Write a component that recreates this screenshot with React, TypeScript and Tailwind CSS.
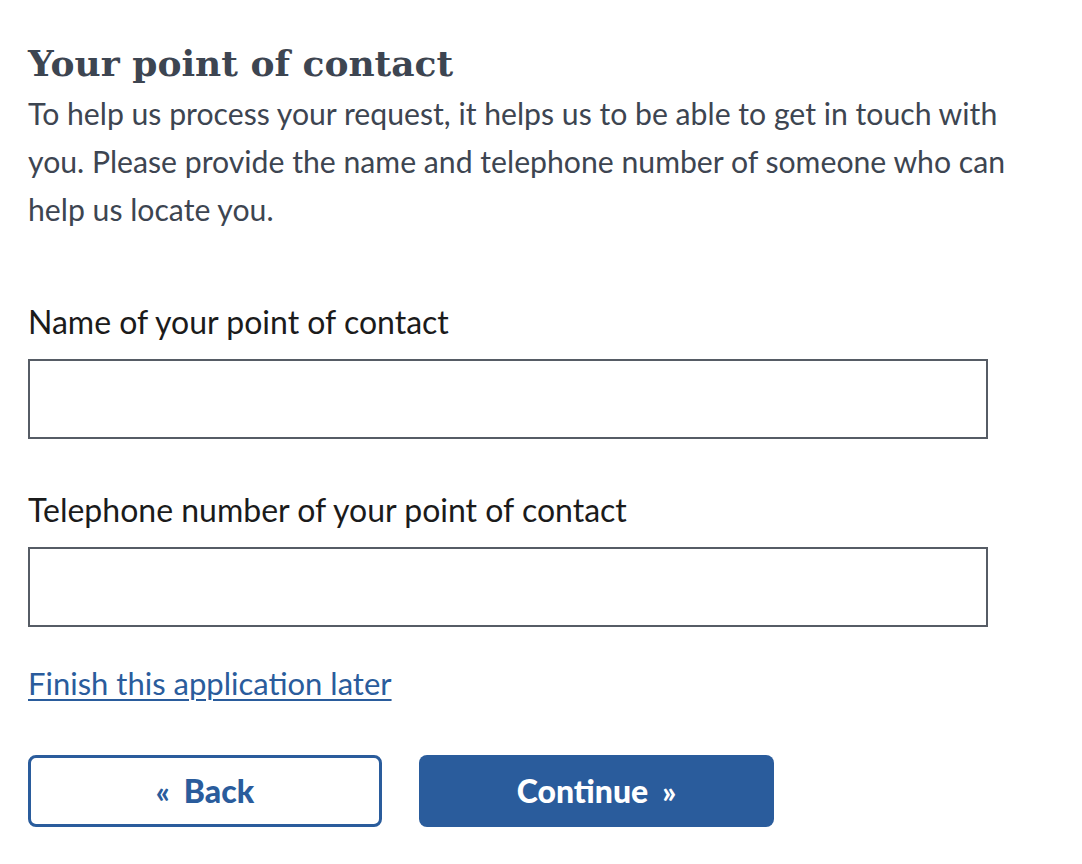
import React from 'react';

export default function App() {
  return (
    <div className="min-h-[864px] bg-white pl-[28px] pt-[37px] font-['Lato','Open_Sans',sans-serif]">
      {/* Heading */}
      <h1 className="font-['DejaVu_Serif',serif] text-[36px] font-bold leading-[52px] text-[#3d4551]">
        Your point of contact
      </h1>
      <p className="w-[1024px] text-[30.2px] leading-[48px] text-[#3d4551]">
        To help us process your request, it helps us to be able to get in touch with you. Please provide the name and
        telephone number of someone who can help us locate you.
      </p>

      {/* Fields */}
      <div className="mt-[65px] w-[960px]">
        <label className="block text-[32px] leading-[48px] text-[#1b1b1b]">Name of your point of contact</label>
        <input type="text" className="mt-[13px] block h-[80px] w-full border-2 border-[#565c65] bg-white px-3 text-[30px] outline-none" />

        <label className="mt-[47px] block text-[32px] leading-[48px] text-[#1b1b1b]">
          Telephone number of your point of contact
        </label>
        <input type="tel" className="mt-[13px] block h-[80px] w-full border-2 border-[#565c65] bg-white px-3 text-[30px] outline-none" />
      </div>

      <div className="mt-[32px] leading-[48px]">
        <a href="#" className="text-[31px] text-[#2a5c9c] underline decoration-2 underline-offset-4">
          Finish this application later
        </a>
      </div>

      {/* Navigation buttons */}
      <div className="mt-[42px] flex gap-[37px]">
        <button className="flex h-[72px] w-[354px] items-center justify-center gap-[14px] rounded-lg border-[3px] border-[#2a5c9c] bg-white text-[32px] font-black text-[#2a5c9c]">
          <span className="text-[30px] font-black">«</span>
          <span>Back</span>
        </button>
        <button className="flex h-[72px] w-[355px] items-center justify-center gap-[14px] rounded-lg bg-[#2a5c9c] text-[32px] font-black text-white">
          <span>Continue</span>
          <span className="text-[30px] font-black">»</span>
        </button>
      </div>
    </div>
  );
}
